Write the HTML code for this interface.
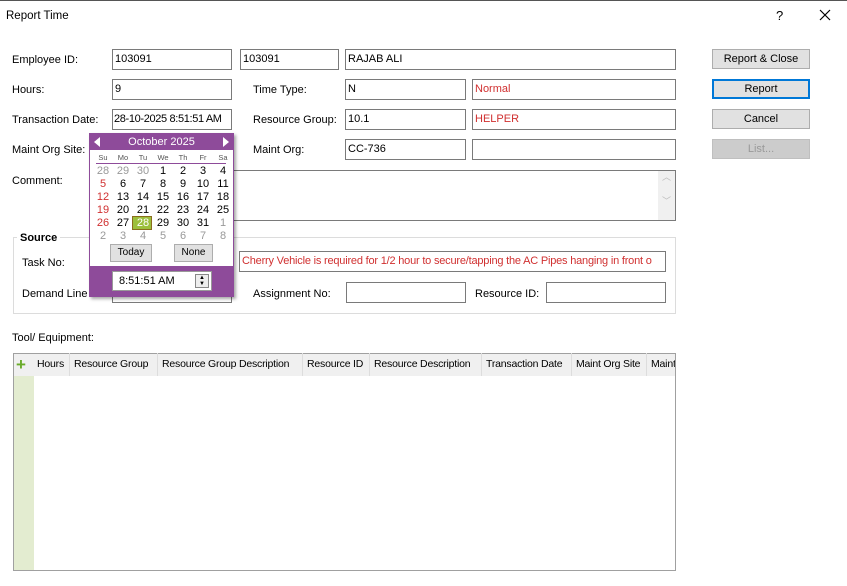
<!DOCTYPE html>
<html><head><style>
*{box-sizing:border-box;margin:0;padding:0}
body{width:847px;height:586px;background:#fff;font-family:"Liberation Sans",sans-serif;font-size:11px;color:#000;position:relative;overflow:hidden}
.a{position:absolute;white-space:nowrap}
.i{position:absolute;border:1px solid #7a7a7a;background:#fff;height:21px;padding:2px 2px;line-height:15px;white-space:nowrap;overflow:hidden}
.r{color:#d03030}
.b{position:absolute;left:712px;width:98px;height:20px;border:1px solid #adadad;background:#e1e1e1;text-align:center;line-height:18px}
.cal{position:absolute;left:89px;top:133px;width:145px;height:164px;background:#fff;border:1px solid #8e4b9a;box-shadow:2px 2px 3px rgba(0,0,0,.35)}
.d{position:absolute;width:20px;text-align:center;font-size:11px}
.dn{position:absolute;width:20px;text-align:center;font-size:7.5px;color:#555}
.g{color:#999}
.th{position:absolute;top:353px;height:23px;line-height:23px;font-size:10.5px;border-right:1px solid #ddd;padding-left:4px;white-space:nowrap;overflow:hidden;letter-spacing:-0.2px}
</style></head><body>
<div class="a" style="left:0;top:0;width:847px;height:1px;background:#555"></div>
<div class="a" style="left:6px;top:10px;font-size:11.5px">Report Time</div>
<div class="a" style="left:776px;top:8px;font-size:13px">?</div>
<svg class="a" style="left:819px;top:9px" width="12" height="12"><path d="M1 1L11 11M11 1L1 11" stroke="#000" stroke-width="1.2"/></svg>

<div class="a" style="left:12px;top:54px">Employee ID:</div>
<div class="a" style="left:12px;top:84px">Hours:</div>
<div class="a" style="left:12px;top:114px">Transaction Date:</div>
<div class="a" style="left:12px;top:144px">Maint Org Site:</div>
<div class="a" style="left:12px;top:175px">Comment:</div>

<div class="i" style="left:112px;top:49px;width:120px">103091</div>
<div class="i" style="left:240px;top:49px;width:99px">103091</div>
<div class="i" style="left:345px;top:49px;width:331px">RAJAB ALI</div>
<div class="i" style="left:112px;top:79px;width:120px">9</div>
<div class="a" style="left:253px;top:84px">Time Type:</div>
<div class="i" style="left:345px;top:79px;width:121px">N</div>
<div class="i r" style="left:472px;top:79px;width:204px">Normal</div>
<div class="i" style="left:112px;top:109px;width:120px;letter-spacing:-0.35px;padding-left:1px">28-10-2025 8:51:51 AM</div>
<div class="a" style="left:253px;top:114px">Resource Group:</div>
<div class="i" style="left:345px;top:109px;width:121px">10.1</div>
<div class="i r" style="left:472px;top:109px;width:204px">HELPER</div>
<div class="a" style="left:253px;top:144px">Maint Org:</div>
<div class="i" style="left:345px;top:139px;width:121px">CC-736</div>
<div class="i" style="left:472px;top:139px;width:204px"></div>
<div class="i" style="left:112px;top:170px;width:564px;height:51px"></div>
<div class="a" style="left:658px;top:171px;width:17px;height:49px;background:#f0f0f0;color:#bbb;font-size:9px;text-align:center;line-height:12px">︿<br><br>﹀</div>

<div class="b" style="top:49px">Report &amp; Close</div>
<div class="b" style="top:79px;border:2px solid #0078d7;line-height:16px">Report</div>
<div class="b" style="top:109px">Cancel</div>
<div class="b" style="top:139px;background:#cccccc;border-color:#bfbfbf;color:#999">List...</div>

<div class="a" style="left:13px;top:237px;width:663px;height:77px;border:1px solid #dcdcdc"></div>
<div class="a" style="left:17px;top:232px;background:#fff;padding:0 3px;font-weight:bold">Source</div>
<div class="a" style="left:22px;top:257px">Task No:</div>
<div class="i r" style="left:239px;top:251px;width:427px;letter-spacing:-0.2px">Cherry Vehicle is required for 1/2 hour to secure/tapping the AC Pipes hanging in front o</div>
<div class="a" style="left:22px;top:288px">Demand Line No:</div>
<div class="i" style="left:112px;top:282px;width:120px"></div>
<div class="a" style="left:253px;top:288px">Assignment No:</div>
<div class="i" style="left:346px;top:282px;width:120px"></div>
<div class="a" style="left:475px;top:288px">Resource ID:</div>
<div class="i" style="left:546px;top:282px;width:120px"></div>

<div class="a" style="left:12px;top:332px">Tool/ Equipment:</div>
<div class="a" style="left:13px;top:353px;width:663px;height:218px;border:1px solid #a0a0a0;background:#fff"></div>
<div class="a" style="left:14px;top:354px;width:661px;height:22px;background:#f0f0f0"></div>
<div class="a" style="left:14px;top:376px;width:20px;height:194px;background:#e3ecd0"></div>
<div class="a" style="left:16px;top:355px;color:#6aab2a;font-size:17px;font-weight:bold">+</div>
<div class="th" style="left:33px;width:37px">Hours</div>
<div class="th" style="left:70px;width:88px">Resource Group</div>
<div class="th" style="left:158px;width:145px">Resource Group Description</div>
<div class="th" style="left:303px;width:67px">Resource ID</div>
<div class="th" style="left:370px;width:112px">Resource Description</div>
<div class="th" style="left:482px;width:90px">Transaction Date</div>
<div class="th" style="left:572px;width:75px">Maint Org Site</div>
<div class="th" style="left:647px;width:28px;border:none">Maint</div>

<div class="cal">
<div class="a" style="left:0;top:0;width:143px;height:16px;background:#8e4b9a;color:#fff;text-align:center;line-height:16px;font-size:11px">October 2025</div>
<div class="a" style="left:4px;top:3px;width:0;height:0;border:5px solid transparent;border-right:6px solid #fff;border-left:0"></div>
<div class="a" style="left:133px;top:3px;width:0;height:0;border:5px solid transparent;border-left:6px solid #fff;border-right:0"></div>
<div class="a" style="left:3px;top:19px;width:140px">
<span class="dn" style="left:0">Su</span><span class="dn" style="left:20px">Mo</span><span class="dn" style="left:40px">Tu</span><span class="dn" style="left:60px">We</span><span class="dn" style="left:80px">Th</span><span class="dn" style="left:100px">Fr</span><span class="dn" style="left:120px">Sa</span></div>
<div class="a" style="left:6px;top:29px;width:130px;height:1px;background:#8e4b9a"></div>
<div class="a" style="left:42px;top:82px;width:20px;height:14px;background:#9cbf3b;border:1px solid #8a6d1d"></div>
<div class="a" style="left:3px;top:31px;width:140px;line-height:13px">
<span class="d g" style="left:0;top:0">28</span><span class="d g" style="left:20px;top:0">29</span><span class="d g" style="left:40px;top:0">30</span><span class="d" style="left:60px;top:0">1</span><span class="d" style="left:80px;top:0">2</span><span class="d" style="left:100px;top:0">3</span><span class="d" style="left:120px;top:0">4</span>
<span class="d r" style="left:0;top:13px">5</span><span class="d" style="left:20px;top:13px">6</span><span class="d" style="left:40px;top:13px">7</span><span class="d" style="left:60px;top:13px">8</span><span class="d" style="left:80px;top:13px">9</span><span class="d" style="left:100px;top:13px">10</span><span class="d" style="left:120px;top:13px">11</span>
<span class="d r" style="left:0;top:26px">12</span><span class="d" style="left:20px;top:26px">13</span><span class="d" style="left:40px;top:26px">14</span><span class="d" style="left:60px;top:26px">15</span><span class="d" style="left:80px;top:26px">16</span><span class="d" style="left:100px;top:26px">17</span><span class="d" style="left:120px;top:26px">18</span>
<span class="d r" style="left:0;top:39px">19</span><span class="d" style="left:20px;top:39px">20</span><span class="d" style="left:40px;top:39px">21</span><span class="d" style="left:60px;top:39px">22</span><span class="d" style="left:80px;top:39px">23</span><span class="d" style="left:100px;top:39px">24</span><span class="d" style="left:120px;top:39px">25</span>
<span class="d r" style="left:0;top:52px">26</span><span class="d" style="left:20px;top:52px">27</span><span class="d" style="left:40px;top:52px;color:#fff">28</span><span class="d" style="left:60px;top:52px">29</span><span class="d" style="left:80px;top:52px">30</span><span class="d" style="left:100px;top:52px">31</span><span class="d g" style="left:120px;top:52px">1</span>
<span class="d g" style="left:0;top:65px">2</span><span class="d g" style="left:20px;top:65px">3</span><span class="d g" style="left:40px;top:65px">4</span><span class="d g" style="left:60px;top:65px">5</span><span class="d g" style="left:80px;top:65px">6</span><span class="d g" style="left:100px;top:65px">7</span><span class="d g" style="left:120px;top:65px">8</span>
</div>
<div class="a" style="left:20px;top:110px;width:42px;height:18px;background:#e1e1e1;border:1px solid #adadad;text-align:center;line-height:16px;font-size:10px">Today</div>
<div class="a" style="left:84px;top:110px;width:39px;height:18px;background:#e1e1e1;border:1px solid #adadad;text-align:center;line-height:16px;font-size:10px">None</div>
<div class="a" style="left:0;top:132px;width:143px;height:30px;background:#8e4b9a"></div>
<div class="a" style="left:22px;top:137px;width:100px;height:20px;background:#fff;border:1px solid #999;padding-left:6px;line-height:18px;font-size:11px">8:51:51 AM</div>
<div class="a" style="left:105px;top:140px;width:14px;height:14px;background:#eee;border:1px solid #888;font-size:6px;line-height:6px;text-align:center">▲<br>▼</div>
</div>
</body></html>
